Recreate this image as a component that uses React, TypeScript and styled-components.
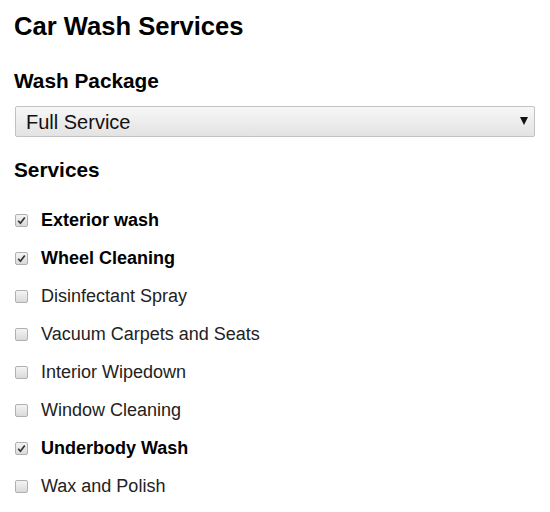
import React, { useState } from 'react';
import styled, { createGlobalStyle } from 'styled-components';

const GlobalStyle = createGlobalStyle`
  body {
    margin: 0;
    background: #fff;
    font-family: 'Liberation Sans', Arial, sans-serif;
    color: #000;
  }
`;

const Page = styled.div`
  padding: 11px 14px;
`;

const Title = styled.h1`
  margin: 0;
  font-size: 25.6px;
  line-height: 30px;
  font-weight: bold;
`;

const Heading = styled.h2<{ $gap: number }>`
  margin: ${(p) => p.$gap}px 0 0;
  font-size: 20.8px;
  line-height: 24px;
  font-weight: bold;
`;

const SelectWrap = styled.div`
  position: relative;
  margin: 13px 0 0 1px;
  width: 520px;
`;

const Select = styled.select`
  appearance: none;
  width: 100%;
  height: 31px;
  padding: 0 30px 0 10px;
  border: 1px solid #c2c2c2;
  border-radius: 2px;
  background: linear-gradient(#f7f7f7, #e3e3e3);
  font-family: 'Liberation Sans', Arial, sans-serif;
  font-size: 20px;
  color: #111;
  outline: none;
`;

const Arrow = styled.span`
  position: absolute;
  right: 7px;
  top: 11px;
  width: 0;
  height: 0;
  border-left: 4px solid transparent;
  border-right: 4px solid transparent;
  border-top: 8px solid #111;
  pointer-events: none;
`;

const List = styled.div`
  margin-top: 19px;
  display: flex;
  flex-direction: column;
`;

const Row = styled.label`
  display: flex;
  align-items: center;
  height: 38.1px;
  cursor: pointer;
`;

const Box = styled.span`
  box-sizing: border-box;
  width: 13px;
  height: 13px;
  margin: 0 13px 0 1px;
  border: 1px solid #b0b0b0;
  border-radius: 2px;
  background: linear-gradient(#f4f4f4, #dadada);
  display: flex;
  align-items: center;
  justify-content: center;
`;

const HiddenInput = styled.input`
  display: none;
`;

const Label = styled.span<{ $on: boolean }>`
  font-size: 18px;
  font-weight: ${(p) => (p.$on ? 'bold' : 'normal')};
  color: ${(p) => (p.$on ? '#000' : '#222')};
`;

const services = [
  { name: 'Exterior wash', on: true },
  { name: 'Wheel Cleaning', on: true },
  { name: 'Disinfectant Spray', on: false },
  { name: 'Vacuum Carpets and Seats', on: false },
  { name: 'Interior Wipedown', on: false },
  { name: 'Window Cleaning', on: false },
  { name: 'Underbody Wash', on: true },
  { name: 'Wax and Polish', on: false },
];

const Check = () => (
  <svg width="9" height="9" viewBox="0 0 9 9">
    <path d="M1.2 4.8 L3.4 7.2 L7.8 1.4" fill="none" stroke="#333" strokeWidth="1.7" />
  </svg>
);

export default function App() {
  const [checked, setChecked] = useState(services.map((s) => s.on));

  const toggle = (i: number) => {
    setChecked((prev) => prev.map((v, j) => (j === i ? !v : v)));
  };

  return (
    <Page>
      <GlobalStyle />
      <Title>Car Wash Services</Title>
      <Heading $gap={28}>Wash Package</Heading>
      <SelectWrap>
        <Select defaultValue="full">
          <option value="basic">Basic</option>
          <option value="full">Full Service</option>
          <option value="deluxe">Deluxe</option>
        </Select>
        <Arrow />
      </SelectWrap>
      <Heading $gap={21}>Services</Heading>
      <List>
        {services.map((s, i) => (
          <Row key={s.name}>
            <HiddenInput type="checkbox" checked={checked[i]} onChange={() => toggle(i)} />
            <Box>{checked[i] && <Check />}</Box>
            <Label $on={checked[i]}>{s.name}</Label>
          </Row>
        ))}
      </List>
    </Page>
  );
}
